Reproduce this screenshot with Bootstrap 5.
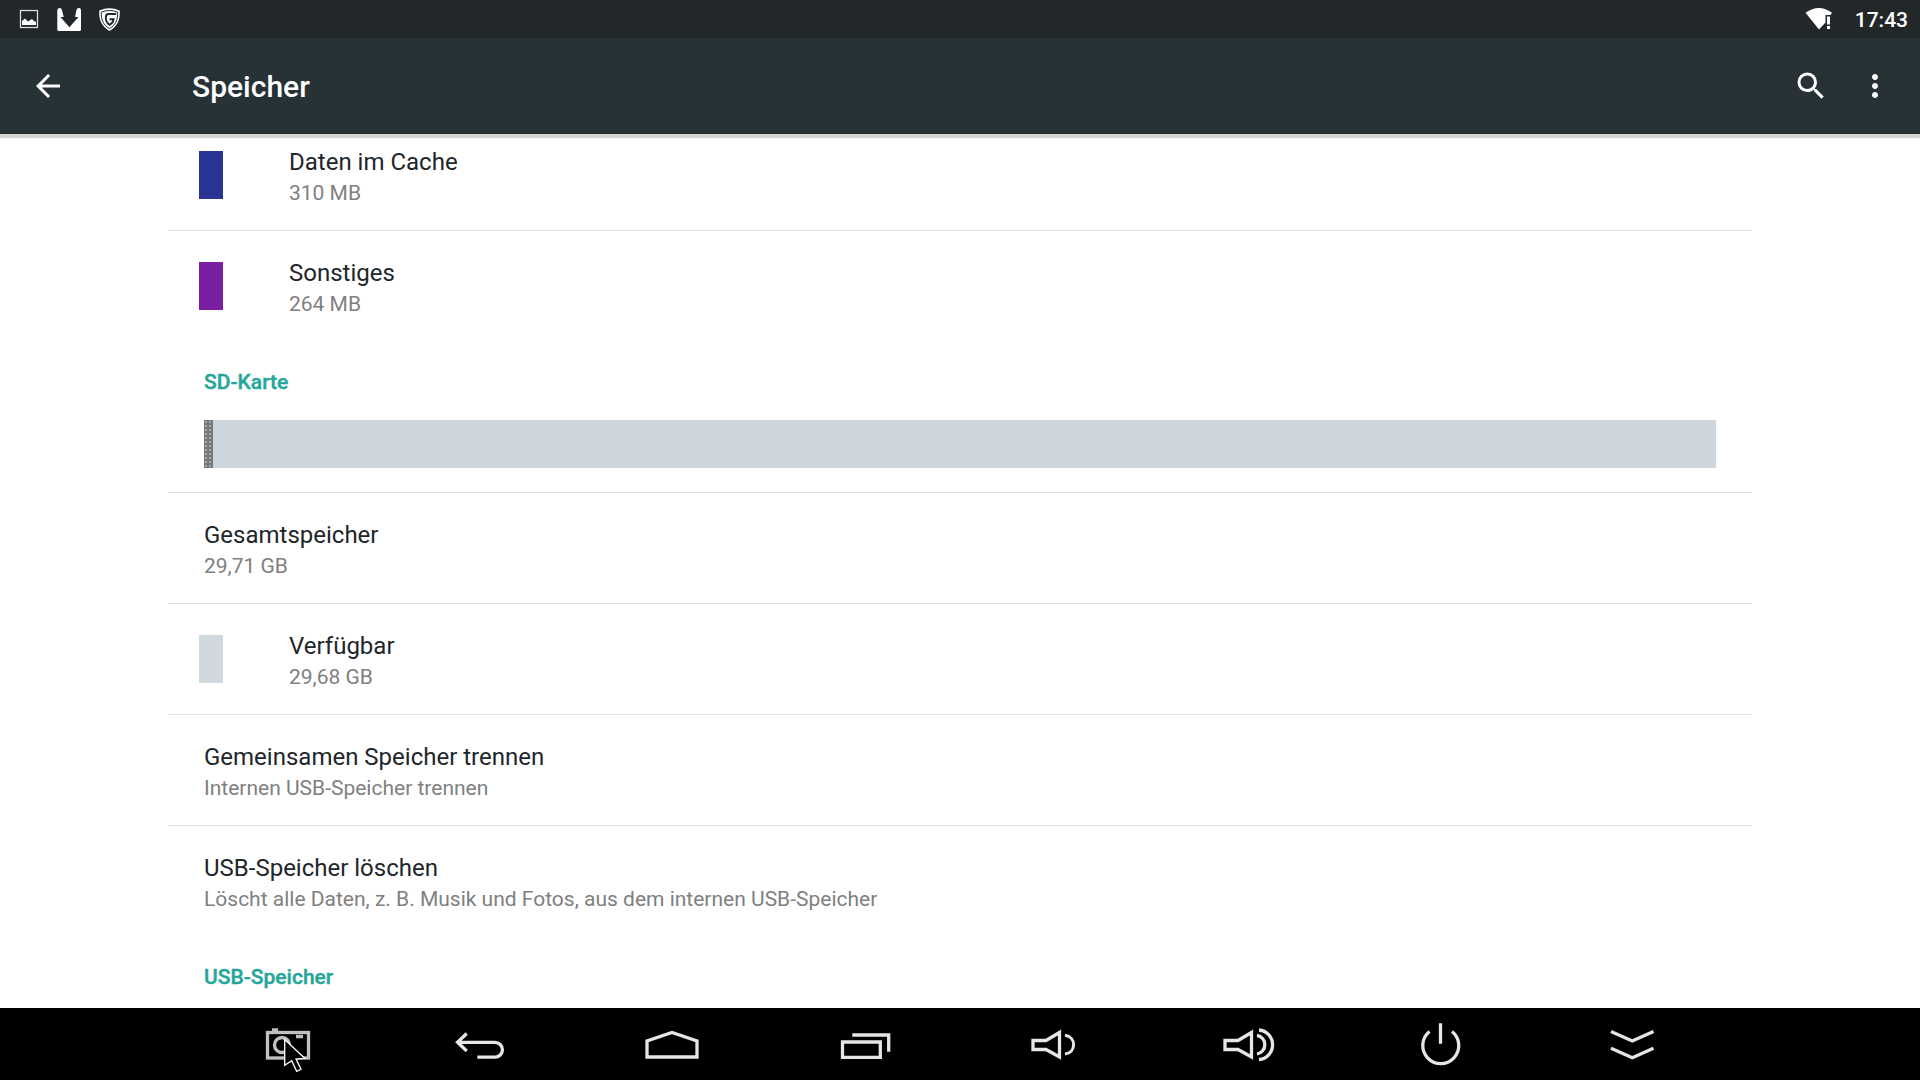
<!DOCTYPE html>
<html lang="de">
<head>
<meta charset="utf-8">
<meta name="viewport" content="width=device-width, initial-scale=1">
<title>Speicher</title>
<link href="https://cdn.jsdelivr.net/npm/bootstrap@5.3.0/dist/css/bootstrap.min.css" rel="stylesheet">
<style>
  body { font-family: Roboto, "Noto Sans", sans-serif; background: #fff; color: #20262a; }
  svg { display: block; flex: none; }
  .status-bar { height: 38px; background: #22272a; color: #fff; padding: 0 12px 0 9px; }
  .status-time { font-size: 21px; line-height: 38px; font-weight: 500; padding-top: 2px; }
  .app-bar { height: 96px; background: #273237; color: #fff; padding: 0 27px 0 30px; box-shadow: 0 4px 1px #d4d4d4; z-index: 2; }
  .app-bar h1 { font-size: 30px; line-height: 40px; font-weight: 500; margin-left: 126px; padding-top: 2px; }
  .app-actions { gap: 28px; }
  .icon-btn { color: #fff; border: 0; background: none; padding: 0; }
  .settings { padding: 0 8.75%; min-height: 0; }
  .entry { border: 0; border-bottom: 1px solid #e0e0e0; padding: 24px 36px; background: none; color: inherit; }
  .entry-top { padding-top: 10px; }
  .entry-keyed { padding-left: 31px; gap: 66px; }
  .entry-last { border-bottom: 0; }
  .entry-title { font-size: 24px; line-height: 36px; }
  .entry-info { font-size: 21px; line-height: 26px; color: #808080; }
  .swatch { width: 24px; height: 48px; flex: none; }
  .key-cache { background: #283593; }
  .key-misc { background: #7b1fa2; }
  .key-free { background: #cfd8dc; }
  .section-title { font-size: 21px; line-height: 28px; font-weight: 500; color: #26a69a; padding: 27px 36px 0; -webkit-text-stroke: 0.4px #26a69a; }
  .usage { height: 48px; border-radius: 0; background: #ced6dd; }
  .usage .progress-bar { background: radial-gradient(circle, #a8a8a8 1px, transparent 1px) 0 0 / 4px 4px #777; }
  .nav-keys { height: 72px; background: #000; padding: 0 10%; z-index: 2; }
  .nav-keys svg { stroke: #e6e6e6; stroke-width: 3.3; fill: none; }
  .nav-keys .pointer { left: 50%; top: 0; transform: translateX(-50%); stroke: #fff; stroke-width: 1.3; fill: #000; pointer-events: none; }
  .nav-keys .camera { stroke: #bfc1c0; }
</style>
<script src="https://cdn.jsdelivr.net/npm/bootstrap@5.3.0/dist/js/bootstrap.bundle.min.js"></script>
</head>
<body>
<div class="vh-100 d-flex flex-column overflow-hidden">
  <div class="status-bar d-flex align-items-center justify-content-between flex-shrink-0">
    <div class="d-flex">
      <svg width="40" height="38" viewBox="0 0 40 38" aria-hidden="true"><rect x="11.500" y="10.500" width="17" height="17" fill="none" stroke="#ddd" stroke-width="1.300"/><path d="M13 25v-4l3-2.500 3 3 4-2.500 2 2 2 1v3z" fill="#fff"/></svg>
      <svg width="40" height="38" viewBox="0 0 40 38" aria-hidden="true"><path d="M8.300 11Q8.300 8 11 8 13 8.300 13.200 11L14.700 17H11.500L20.400 27.200 29.500 17H26L27.300 11Q27.500 8 30 8 32 8 32 11V29.500Q32 31 30.500 31H9.800Q8.300 31 8.300 29.500z" fill="#fff"/></svg>
      <svg width="40" height="38" viewBox="0 0 40 38" aria-hidden="true"><path d="M10.300 10.500Q20.500 6 30.700 10.500C31.500 20 28 26.500 20.500 31 13 26.500 9.500 20 10.300 10.500z" fill="#fff"/><path d="M28.700 12.200Q20.500 8.800 12.300 12.200C12 19 14 25 20.500 28.600 27 25 28.900 19 28.700 12.200z" fill="none" stroke="#22272a" stroke-width="1"/><path d="M27.200 14H19.500Q16.800 14 16.800 17.500 16.800 22.500 20.500 24.800 24 23 24.600 19.300H20.500" fill="none" stroke="#22272a" stroke-width="1.900"/></svg>
    </div>
    <div class="d-flex align-items-center">
      <svg width="51" height="38" viewBox="0 0 51 38" role="img" aria-label="WLAN ohne Internet"><path d="M1.500 12.800Q15 3 28 12.800L26.500 15H21.500V22.500L15 29.500z" fill="#fff"/><path d="M23 16.500h3v8h-3zM23 26h3v3h-3z" fill="#fff"/></svg>
      <span class="status-time">17:43</span>
    </div>
  </div>

  <header class="app-bar d-flex align-items-center position-relative flex-shrink-0">
    <button class="icon-btn" type="button" aria-label="Zurück"><svg width="36" height="36" viewBox="0 0 24 24" fill="currentColor"><path d="M20 11H7.830l5.590-5.590L12 4l-8 8 8 8 1.410-1.410L7.830 13H20v-2z"/></svg></button>
    <h1 class="mb-0 me-auto">Speicher</h1>
    <div class="app-actions d-flex">
      <button class="icon-btn" type="button" aria-label="Suchen"><svg width="36" height="36" viewBox="0 0 24 24" fill="currentColor"><path d="M15.500 14h-.79l-.28-.27A6.471 6.471 0 0 0 16 9.500 6.500 6.500 0 1 0 9.500 16c1.610 0 3.090-.59 4.230-1.570l.27.28v.79l5 4.990L20.490 19l-4.990-5zm-6 0C7.010 14 5 11.990 5 9.500S7.010 5 9.500 5 14 7.010 14 9.500 11.990 14 9.500 14z"/></svg></button>
      <button class="icon-btn" type="button" aria-label="Weitere Optionen"><svg width="36" height="36" viewBox="0 0 24 24" fill="currentColor"><path d="M12 8c1.100 0 2-.9 2-2s-.9-2-2-2-2 .9-2 2 .9 2 2 2zm0 2c-1.100 0-2 .9-2 2s.9 2 2 2 2-.9 2-2-.9-2-2-2zm0 6c-1.100 0-2 .9-2 2s.9 2 2 2 2-.9 2-2-.9-2-2-2z"/></svg></button>
    </div>
  </header>

  <main class="settings flex-fill overflow-hidden">
    <div class="entry entry-top entry-keyed d-flex align-items-center">
      <span class="swatch key-cache"></span>
      <div><div class="entry-title">Daten im Cache</div><div class="entry-info">310 MB</div></div>
    </div>
    <div class="entry entry-keyed entry-last d-flex align-items-center">
      <span class="swatch key-misc"></span>
      <div><div class="entry-title">Sonstiges</div><div class="entry-info">264 MB</div></div>
    </div>

    <h2 class="section-title mb-0">SD-Karte</h2>
    <div class="entry">
      <div class="progress usage" role="progressbar" aria-label="Belegter Speicher" aria-valuenow="1" aria-valuemin="0" aria-valuemax="100">
        <div class="progress-bar" style="width: 0.6%"></div>
      </div>
    </div>
    <div class="entry">
      <div class="entry-title">Gesamtspeicher</div><div class="entry-info">29,71 GB</div>
    </div>
    <div class="entry entry-keyed d-flex align-items-center">
      <span class="swatch key-free"></span>
      <div><div class="entry-title">Verfügbar</div><div class="entry-info">29,68 GB</div></div>
    </div>
    <button type="button" class="entry d-block w-100 text-start">
      <span class="entry-title d-block">Gemeinsamen Speicher trennen</span><span class="entry-info d-block">Internen USB-Speicher trennen</span>
    </button>
    <button type="button" class="entry entry-last d-block w-100 text-start">
      <span class="entry-title d-block">USB-Speicher löschen</span><span class="entry-info d-block">Löscht alle Daten, z. B. Musik und Fotos, aus dem internen USB-Speicher</span>
    </button>

    <h2 class="section-title mb-0">USB-Speicher</h2>
  </main>

  <nav class="nav-keys d-flex flex-shrink-0 position-relative" aria-label="Systemtasten">
    <button class="icon-btn flex-fill d-flex justify-content-center position-relative" type="button" aria-label="Screenshot">
      <svg class="camera" width="64" height="72" viewBox="0 0 64 72"><rect x="11.500" y="24.500" width="41" height="25.500"/><path d="M16 22h6M40 28.500h7"/><circle cx="26" cy="37" r="7.500"/></svg>
      <svg class="pointer position-absolute" width="64" height="72" viewBox="0 0 64 72"><path d="M28.700 31.500V57.300L35.700 52.700 40.700 63.300 45 61.300 40 51 48.700 50.300z"/></svg>
    </button>
    <button class="icon-btn flex-fill d-flex justify-content-center" type="button" aria-label="Zurück">
      <svg width="64" height="72" viewBox="0 0 64 72"><path d="M18.700 25.500 9.500 34.300 18.700 43M9.500 34.300H47A7.400 7.400 0 0 1 47 49.200H29.300"/></svg>
    </button>
    <button class="icon-btn flex-fill d-flex justify-content-center" type="button" aria-label="Startseite">
      <svg width="64" height="72" viewBox="0 0 64 72"><path d="M7 49V33L32 24.500 57 33V49z"/></svg>
    </button>
    <button class="icon-btn flex-fill d-flex justify-content-center" type="button" aria-label="Letzte Apps">
      <svg width="64" height="72" viewBox="0 0 64 72"><path d="M10.500 34H48.300V49.300H10.500zM20.300 27H56.700V43.700"/></svg>
    </button>
    <button class="icon-btn flex-fill d-flex justify-content-center" type="button" aria-label="Leiser">
      <svg width="64" height="72" viewBox="0 0 64 72"><path d="M9 32.500H22L35.500 24.500V49L22 41.500H9z"/><path d="M41 27.300C52.500 29 52.500 44.500 41 46" stroke-width="3"/></svg>
    </button>
    <button class="icon-btn flex-fill d-flex justify-content-center" type="button" aria-label="Lauter">
      <svg width="64" height="72" viewBox="0 0 64 72"><path d="M9 32.500H22L35.500 24.500V49L22 41.500H9z"/><path d="M41 27.300A9.500 9.500 0 0 1 41 46M43 22A14.800 14.800 0 0 1 43 51.500"/></svg>
    </button>
    <button class="icon-btn flex-fill d-flex justify-content-center" type="button" aria-label="Ein/Aus">
      <svg width="64" height="72" viewBox="0 0 64 72"><path d="M21.500 23.500A18 18 0 1 0 44 23.500M32.500 15.300V35.700"/></svg>
    </button>
    <button class="icon-btn flex-fill d-flex justify-content-center" type="button" aria-label="Leiste ausblenden">
      <svg width="64" height="72" viewBox="0 0 64 72"><path d="M11 23.500 32.300 33 53.500 23.500M11 40.300 32.300 49.800 53.500 40.300"/></svg>
    </button>
  </nav>
</div>
</body>
</html>
